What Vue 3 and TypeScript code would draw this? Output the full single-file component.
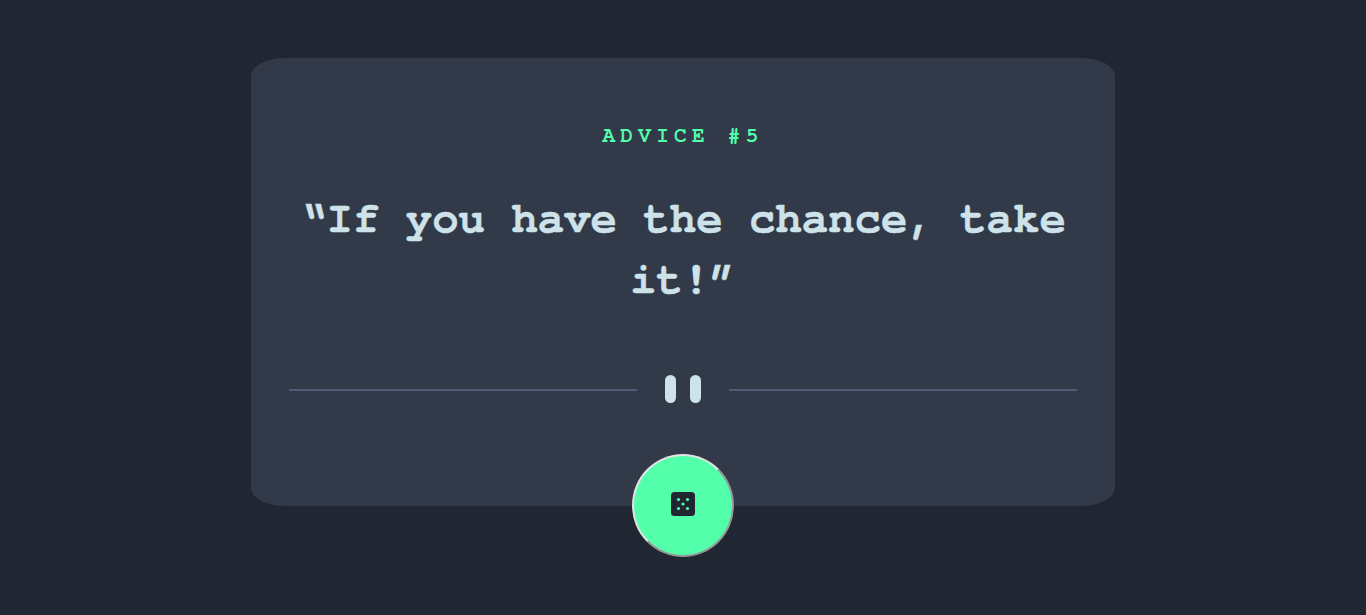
<script setup lang="ts">
interface Advice {
  id: number
  text: string
}

const advice: Advice = { id: 5, text: 'If you have the chance, take it!' }
const pips: [number, number][] = [[7.5, 7.5], [16.5, 7.5], [12, 12], [7.5, 16.5], [16.5, 16.5]]
</script>

<template>
  <main class="page">
    <section class="card">
      <h1 class="label">ADVICE #{{ advice.id }}</h1>
      <p class="quote">“{{ advice.text }}”</p>
      <div class="divider">
        <span class="line"></span>
        <span class="bar"></span>
        <span class="bar"></span>
        <span class="line"></span>
      </div>
      <button class="dice" type="button" aria-label="New advice">
        <svg width="24" height="24" viewBox="0 0 24 24">
          <rect width="24" height="24" rx="3.5" fill="#202632" />
          <circle v-for="([x, y], i) in pips" :key="i" :cx="x" :cy="y" r="1.6" fill="#53ffaa" />
        </svg>
      </button>
    </section>
  </main>
</template>

<style>
body {
  margin: 0;
  background: #202632;
}
</style>

<style scoped>
.page {
  min-height: 615px;
  box-sizing: border-box;
  padding-top: 58px;
  background: #202632;
  font-family: 'TeX Gyre Cursor', FreeMono, 'Liberation Mono', monospace;
  font-weight: 700;
}
.card {
  position: relative;
  box-sizing: border-box;
  width: 864px;
  height: 448px;
  margin: 0 auto;
  padding: 64px 38px 0;
  border-radius: 4%;
  background: #323a49;
  text-align: center;
}
.label {
  margin: 0;
  font-size: 21px;
  line-height: 24px;
  letter-spacing: 5.3px;
  color: #53ffaa;
}
.quote {
  margin: 38px 0 0;
  font-size: 44px;
  line-height: 61px;
  color: #cee3e9;
  -webkit-text-stroke: 0.5px #cee3e9;
}
.divider {
  display: flex;
  align-items: center;
  justify-content: center;
  margin-top: 69px;
}
.line {
  flex: 1;
  height: 2px;
  margin-top: 2px;
  background: #4f5d74;
}
.bar {
  width: 11px;
  height: 28px;
  border-radius: 6px;
  background: #cee3e9;
}
.bar:nth-child(2) {
  margin: 0 7px 0 28px;
}
.bar:nth-child(3) {
  margin: 0 28px 0 7px;
}
.dice {
  position: absolute;
  left: 381px;
  bottom: -51px;
  display: flex;
  align-items: center;
  justify-content: center;
  box-sizing: border-box;
  width: 102px;
  height: 103px;
  padding: 0 0 3px;
  border: 2px solid;
  border-color: #e3e3e3 #979797 #979797 #e3e3e3;
  border-radius: 50%;
  background: #53ffaa;
}
</style>
